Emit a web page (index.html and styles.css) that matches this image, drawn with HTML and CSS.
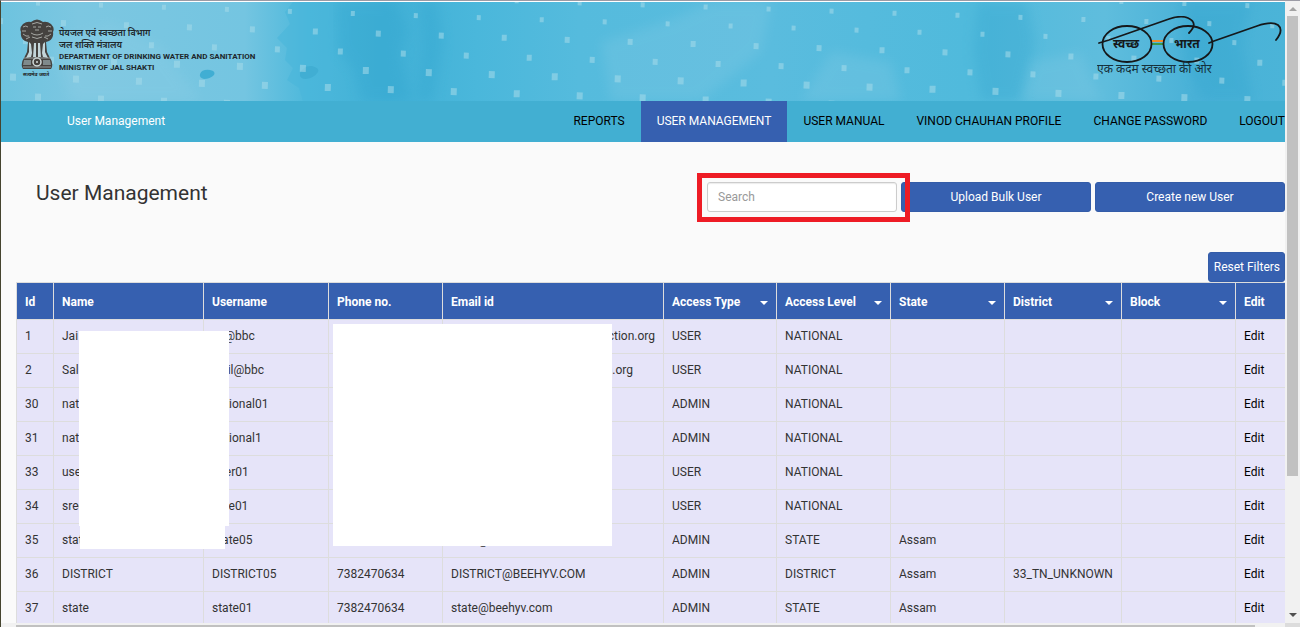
FILE: index.html
```html
<!DOCTYPE html>
<html lang="en">
<head>
<meta charset="utf-8">
<title>User Management</title>
<link rel="stylesheet" href="styles.css">
</head>
<body>
<div class="frame">
  <div class="page">
    <header class="banner">
      <svg class="banner-art" viewBox="0 0 1284 99" preserveAspectRatio="xMidYMid slice" aria-hidden="true">
        <defs>
          <linearGradient id="sky" x1="0" x2="1" y1="0" y2="0">
            <stop offset="0" stop-color="#6dc3df"/><stop offset=".06" stop-color="#7cc7e1"/><stop offset=".19" stop-color="#74c5e1"/>
            <stop offset=".24" stop-color="#4cb8db"/><stop offset=".3" stop-color="#41b0d6"/><stop offset=".37" stop-color="#4ab7db"/>
            <stop offset=".45" stop-color="#55bbdd"/><stop offset=".6" stop-color="#5abcde"/><stop offset=".75" stop-color="#50badc"/>
            <stop offset=".86" stop-color="#5fbddd"/><stop offset=".93" stop-color="#49b1d7"/><stop offset="1" stop-color="#4bb4d8"/>
          </linearGradient>
          <filter id="soft"><feGaussianBlur stdDeviation="6"/></filter>
        </defs>
        <rect width="1284" height="99" fill="url(#sky)"/>
        <g filter="url(#soft)" fill="#2fa3cd" opacity=".3">
          <path d="M335 0h60l12 30-10 20 14 49h-50l-8-30-16-20z"/>
          <path d="M375 20l18-6 8 50-14 35h-12l-8-40z"/>
          <path d="M420 0h16l6 40-10 59h-16l6-50z"/>
          <path d="M976 0h50l8 40-14 59h-40l-8-50z"/>
          <path d="M1180 0h70l-10 40 12 59h-50l-20-45z"/>
        </g>
        <g filter="url(#soft)" fill="#9ad3e8" opacity=".2">
          <path d="M50 40l60-20 50 25 40 54H70z"/><path d="M600 40l70-22 40-18h60l-10 50-60 49h-90z"/>
          <path d="M830 50l60 10 10 39h-100z"/><path d="M1030 60l50-10 20 49h-80z"/>
        </g>
        <path fill="#49b6da" opacity=".6" d="M292 0l-8 10 5 12-13 14 10 10-2 12 8 8-6 12 12 8 4 13h30V0z"/>
        <g fill="#41aed3"><path d="M199 72q2-5 10-4 6 1 4 5-4 4-10 4-5-1-4-5z"/><path d="M299 71q4-8 12-7 8 2 6 6-4 6-12 7-7 0-6-6z"/></g>
        <g stroke="#a5dbe9" stroke-opacity=".55">
          <path stroke-width="5" stroke-dasharray="4 59" d="M48-36l1300 43M10-18l1300 43M35 1l1300 43"/>
          <path stroke-width="6" stroke-dasharray="5 58" d="M-3 19l1300 43M22 39l1300 43"/>
          <path stroke-width="7" stroke-dasharray="6 57" d="M47 58l1300 43M9 75l1300 43M34 95l1300 43"/>
        </g>
      </svg>
      <div class="ministry">
        <svg class="emblem" viewBox="0 0 36 58" role="img" aria-label="State Emblem of India">
          <path d="M12 3q6-5 12 0 4-1 8 2 4 4 2 8 1 6-4 9l-3 1 1 10 3 6q3 4 2 9l-1 2H4l-1-2q-1-5 2-9l3-6 1-10-3-1q-5-3-4-9-2-4 2-8 4-3 8-2z" fill="#45423f"/>
          <path d="M10 23l2 2 1 9-1 4-5 1 3-6zM15 24h2v14h-3zM19 24h2l1 14h-3zM26 23l-2 2-1 9 1 4 5 1-3-6z" fill="#c3d5d9"/>
          <g fill="none" stroke="#a5a7a3" stroke-width="1">
            <path d="M13 5q5-3 10 0M14 8h3M19 8h3M16 11h4M12 14q6 4 12 0M13 18q5 3 10 0"/>
            <path d="M4 8q3-2 5 0M3 12h4M4 15q3 3 6 2M7 20l4-2M32 8q-3-2-5 0M33 12h-4M32 15q-3 3-6 2M29 20l-4-2"/>
          </g>
          <path d="M5 41h7v5H4zM24 41h7l1 5h-8z" fill="#7f8a8b"/>
          <circle cx="18" cy="43" r="4" fill="#45423f" stroke="#d4dcdb" stroke-width="1.5"/><circle cx="18" cy="43" r="1" fill="#d4dcdb"/>
          <path d="M5 39h26M4 48h28" stroke="#aab3b2" stroke-width=".8"/>
          <text class="motto" x="4" y="57">सत्यमेव जयते</text>
        </svg>
        <div class="ministry-text">
          <span class="hindi">पेयजल एवं स्वच्छता विभाग</span>
          <span class="hindi">जल शक्ति मंत्रालय</span>
          <span>DEPARTMENT OF DRINKING WATER AND SANITATION</span>
          <span>MINISTRY OF JAL SHAKTI</span>
        </div>
      </div>
      <svg class="glasses" viewBox="0 0 186 62" role="img" aria-label="Swachh Bharat">
        <path d="M55 25h11" stroke="#f08b2a" stroke-width="2"/><path d="M55 28h11" stroke="#3a9a4a" stroke-width="2"/>
        <g fill="none" stroke="#15181a" stroke-width="1.8" stroke-linecap="round">
          <ellipse cx="30" cy="28" rx="24.500" ry="18"/><ellipse cx="91" cy="28" rx="24.500" ry="18"/>
          <path d="M2 27l10-3L72 3q12-4 19-1 11 5 1 15"/><path d="M112 27l5-2 43-15q15-5 21-1 6 5-2 15"/>
        </g>
        <text class="lens" x="16" y="32">स्वच्छ</text><text class="lens" x="77" y="32">भारत</text>
        <text class="slogan" x="0" y="57">एक कदम स्वच्छता की ओर</text>
      </svg>
    </header>
    <nav class="nav">
      <span class="nav-title">User Management</span>
      <ul class="nav-links">
        <li><a href="#">REPORTS</a></li>
        <li><a href="#" class="active">USER MANAGEMENT</a></li>
        <li><a href="#">USER MANUAL</a></li>
        <li><a href="#">VINOD CHAUHAN PROFILE</a></li>
        <li><a href="#">CHANGE PASSWORD</a></li>
        <li><a href="#">LOGOUT</a></li>
      </ul>
    </nav>
    <main>
      <div class="toolbar">
        <h1>User Management</h1>
        <div class="search"><input type="text" placeholder="Search" aria-label="Search"><span class="highlight"></span></div>
        <button type="button" class="btn">Upload Bulk User</button>
        <button type="button" class="btn">Create new User</button>
      </div>
      <div class="reset"><button type="button" class="btn btn-small">Reset Filters</button></div>
      <div class="table-wrap">
        <table>
          <colgroup><col class="c-id"><col class="c-name"><col class="c-user"><col class="c-std"><col class="c-mail"><col class="c-type"><col class="c-std"><col class="c-std"><col class="c-dist"><col class="c-std"><col class="c-edit"></colgroup>
          <thead><tr><th>Id</th><th>Name</th><th>Username</th><th>Phone no.</th><th>Email id</th><th class="filter">Access Type</th><th class="filter">Access Level</th><th class="filter">State</th><th class="filter">District</th><th class="filter">Block</th><th>Edit</th></tr></thead>
          <tbody>
            <tr><td>1</td><td>Jai</td><td>jai@bbc</td><td></td><td class="end">ction.org</td><td>USER</td><td>NATIONAL</td><td></td><td></td><td></td><td><a href="#">Edit</a></td></tr>
            <tr><td>2</td><td>Sal</td><td>salil@bbc</td><td></td><td class="end inset">n.org</td><td>USER</td><td>NATIONAL</td><td></td><td></td><td></td><td><a href="#">Edit</a></td></tr>
            <tr><td>30</td><td>national</td><td>national01</td><td></td><td></td><td>ADMIN</td><td>NATIONAL</td><td></td><td></td><td></td><td><a href="#">Edit</a></td></tr>
            <tr><td>31</td><td>national</td><td>national1</td><td></td><td></td><td>ADMIN</td><td>NATIONAL</td><td></td><td></td><td></td><td><a href="#">Edit</a></td></tr>
            <tr><td>33</td><td>user</td><td>user01</td><td></td><td></td><td>USER</td><td>NATIONAL</td><td></td><td></td><td></td><td><a href="#">Edit</a></td></tr>
            <tr><td>34</td><td>sree</td><td>sree01</td><td></td><td></td><td>USER</td><td>NATIONAL</td><td></td><td></td><td></td><td><a href="#">Edit</a></td></tr>
            <tr><td>35</td><td>state</td><td>state05</td><td></td><td>state@</td><td>ADMIN</td><td>STATE</td><td>Assam</td><td></td><td></td><td><a href="#">Edit</a></td></tr>
            <tr><td>36</td><td>DISTRICT</td><td>DISTRICT05</td><td>7382470634</td><td>DISTRICT@BEEHYV.COM</td><td>ADMIN</td><td>DISTRICT</td><td>Assam</td><td>33_TN_UNKNOWN</td><td></td><td><a href="#">Edit</a></td></tr>
            <tr><td>37</td><td>state</td><td>state01</td><td>7382470634</td><td>state@beehyv.com</td><td>ADMIN</td><td>STATE</td><td>Assam</td><td></td><td></td><td><a href="#">Edit</a></td></tr>
          </tbody>
        </table>
        <span class="mask mask-names"></span><span class="mask mask-names-end"></span><span class="mask mask-contact"></span>
      </div>
    </main>
  </div>
  <div class="scroll-v"><i class="up"></i><i class="thumb"></i><i class="down"></i></div>
  <div class="scroll-h"><i class="thumb"></i></div>
  <div class="corner"></div>
</div>
</body>
</html>
```
FILE: styles.css
```css
* { box-sizing: border-box; }
body { margin: 0; font: 12px/18px Roboto, "Liberation Sans", sans-serif; color: #333; background: #fafafa; }
.frame { display: grid; grid-template-columns: minmax(0, 1fr) 15px; grid-template-rows: minmax(0, 1fr) 4px; height: 100vh; border-left: 1px solid #45442f; border-top: 1px solid #9b9ba5; }
.page { overflow: hidden; border-top: 1px solid #fff; }
.banner { position: relative; display: flex; justify-content: space-between; align-items: flex-start; height: 99px; padding: 14px 2px 0 18px; color: #20282c; }
.banner-art { position: absolute; inset: 0; width: 100%; height: 100%; }
.ministry { position: relative; display: flex; gap: 4px; padding-top: 3px; }
.emblem { width: 36px; height: 58px; }
.motto { font: bold 5px "Noto Sans", sans-serif; fill: #222; }
.ministry-text { display: flex; flex-direction: column; padding-top: 8px; font: bold 8px/11px Roboto, "Liberation Sans", sans-serif; white-space: nowrap; }
.hindi { font: 600 9px/12px "Noto Sans", sans-serif; }
.glasses { position: relative; width: 186px; height: 62px; }
.lens { font: bold 12px "Noto Sans", sans-serif; fill: #15181a; }
.slogan { font: 12px "Noto Sans", sans-serif; fill: #15303a; }
.nav { display: flex; justify-content: space-between; height: 41px; padding-left: 66px; background: #42afd2; line-height: 40px; white-space: nowrap; }
.nav-title { color: #fff; }
.nav-links { display: flex; margin: 0 -16px 0 0; padding: 0; list-style: none; }
.nav-links a { display: block; height: 41px; padding: 0 16px; color: #000; text-decoration: none; }
.nav-links .active { background: #3660b0; color: #fff; }
main { padding: 40px 0 0 15px; }
.toolbar { display: flex; gap: 4px; }
h1 { flex: 1; margin: 0; padding-left: 20px; font: 21px/22px Roboto, "Liberation Sans", sans-serif; }
.search { position: relative; width: 190px; }
.search input { width: 100%; height: 30px; padding: 0 10px; border: 1px solid #ccc; border-radius: 3px; background: #fff; box-shadow: inset 0 1px 1px rgba(0,0,0,.08); font: inherit; color: #333; }
.search input::placeholder { color: #999; opacity: 1; }
.highlight { position: absolute; z-index: 1; inset: -9px -13px -10px -10px; border: 5px solid #ee1c25; pointer-events: none; }
.btn { width: 190px; height: 30px; padding: 0; border: 1px solid #335ca8; border-radius: 3px; background: #3660b0; color: #fff; font: inherit; }
.reset { display: flex; justify-content: flex-end; margin-top: 40px; }
.btn-small { width: auto; padding: 0 4px 0 5px; }
.table-wrap { position: relative; }
table { width: 100%; border-collapse: collapse; table-layout: fixed; }
.c-id { width: 37px; } .c-name { width: 150px; } .c-user { width: 125px; } .c-std { width: 114px; } .c-type { width: 113px; } .c-mail { width: 221px; } .c-dist { width: 117px; } .c-edit { width: 50px; }
th, td { height: 34px; padding: 0 8px 2px; border: 1px solid #ddd; text-align: left; white-space: nowrap; }
tr > :last-child { border-right: 0; }
th { height: 37px; padding: 1px 8px 0; background: #3660b0; color: #fff; font-weight: bold; }
td { background: #e6e4f9; }
td a { color: #000; text-decoration: none; }
.end { text-align: right; }
.inset { padding-right: 30px; }
.filter::after { content: ""; float: right; margin-top: 8px; border: 4px solid transparent; border-top-color: #fff; border-bottom: 0; }
.mask { position: absolute; background: #fff; }
.mask-names { left: 63px; top: 49px; width: 150px; height: 195px; }
.mask-names-end { left: 64px; top: 244px; width: 145px; height: 23px; }
.mask-contact { left: 317px; top: 42px; width: 279px; height: 222px; }
.scroll-v { display: flex; flex-direction: column; align-items: center; background: #f1f1f1; }
.scroll-v .up { margin: 6px 0 5px; border: 4px solid transparent; border-top: 0; border-bottom-color: #a3a3a3; }
.scroll-v .thumb { width: 11px; height: 74%; background: #c1c1c1; }
.scroll-v .down { margin: auto 0 6px; border: 4px solid transparent; border-bottom: 0; border-top-color: #505050; }
.scroll-h { padding: 2px 30px 0 15px; background: #f1f1f1; }
.scroll-h .thumb { display: block; height: 2px; background: #c1c1c1; }
.corner { background: #dcdcdc; }
```
